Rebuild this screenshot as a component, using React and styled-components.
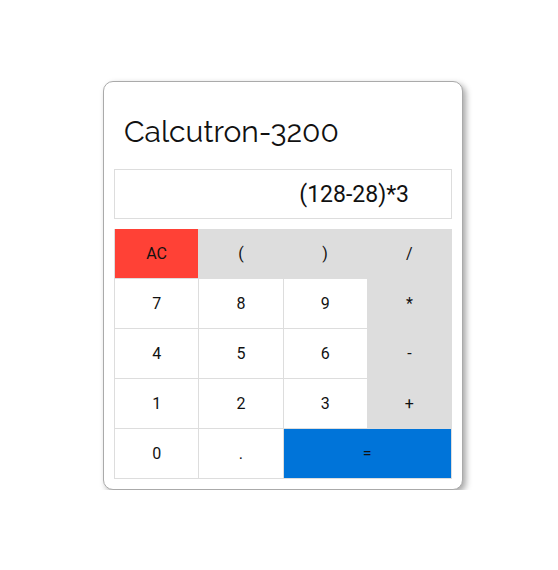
import * as React from "react";
import styled, { createGlobalStyle } from "styled-components";

const GlobalStyle = createGlobalStyle`
  body {
    margin: 0;
    background: #ffffff;
    font-family: Roboto, "Liberation Sans", sans-serif;
  }
`;

const Page = styled.div`
  padding: 81px 0 0 103px;
`;

const Card = styled.div`
  width: 338px;
  padding: 10px;
  border: 1px solid #aaaaaa;
  border-radius: 10px;
  background: #ffffff;
  box-shadow: 3px 3px 6px rgba(0, 0, 0, 0.35);
`;

const Title = styled.h1`
  margin: 0;
  padding: 24px 10px 21px;
  font-family: Raleway, Lato, "Open Sans", sans-serif;
  font-weight: 400;
  font-size: 30px;
  line-height: 32px;
  color: #111111;
`;

const Display = styled.div`
  height: 48px;
  padding: 0 42px 0 10px;
  border: 1px solid #dddddd;
  display: flex;
  align-items: center;
  justify-content: flex-end;
  font-size: 23px;
  color: #111111;
`;

const Keypad = styled.div`
  margin-top: 10px;
  display: grid;
  grid-template-columns: repeat(4, 1fr);
  grid-auto-rows: 50px;
  border-left: 1px solid #dddddd;
`;

const colors = {
  num: "#ffffff",
  op: "#dddddd",
  clear: "#ff4136",
  equals: "#0074d9",
};

const Key = styled.button`
  grid-column: span ${(p) => p.$span || 1};
  margin: 0;
  padding: 0;
  border: none;
  border-right: 1px solid #dddddd;
  border-bottom: 1px solid #dddddd;
  background: ${(p) => colors[p.$kind]};
  font-family: Roboto, "Liberation Sans", sans-serif;
  font-size: 16px;
  color: #111111;
  cursor: pointer;
`;

const keys = [
  ["AC", "clear"],
  ["(", "op"],
  [")", "op"],
  ["/", "op"],
  ["7", "num"],
  ["8", "num"],
  ["9", "num"],
  ["*", "op"],
  ["4", "num"],
  ["5", "num"],
  ["6", "num"],
  ["-", "op"],
  ["1", "num"],
  ["2", "num"],
  ["3", "num"],
  ["+", "op"],
  ["0", "num"],
  [".", "num"],
  ["=", "equals", 2],
];

export default function App() {
  return (
    <Page>
      <GlobalStyle />
      <Card>
        <Title>Calcutron-3200</Title>
        <Display>(128-28)*3</Display>
        <Keypad>
          {keys.map(([label, kind, span]) => (
            <Key key={label} $kind={kind} $span={span}>
              {label}
            </Key>
          ))}
        </Keypad>
      </Card>
    </Page>
  );
}
